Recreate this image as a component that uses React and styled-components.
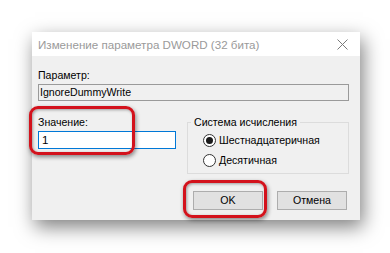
import styled, { createGlobalStyle } from 'styled-components';

const GlobalStyle = createGlobalStyle`
    html, body {
        margin: 0;
        background: #ffffff;
        font-family: 'Liberation Sans', Arial, sans-serif;
    }
`;

const Page = styled.div`
    width: 390px;
    height: 253px;
    padding: 32px 0 0 32px;
    box-sizing: border-box;
    overflow: hidden;
`;

const Dialog = styled.div`
    width: 328px;
    height: 188px;
    background: #f0f0f0;
    box-shadow: 3px 7px 18px rgba(0, 0, 0, 0.5);
    display: flex;
    flex-direction: column;
`;

const TitleBar = styled.div`
    height: 25px;
    background: #ffffff;
    display: flex;
    align-items: center;
    justify-content: space-between;
    padding: 0 12px 0 6px;
    font-size: 11.6px;
    color: #9a9a9a;
`;

const Body = styled.div`
    padding: 11px 11px 10px 6px;
    display: flex;
    flex-direction: column;
`;

const Label = styled.div`
    font-size: 10.6px;
    line-height: 16px;
    color: #000;
`;

const Field = styled.div`
    height: ${(p) => p.$height}px;
    margin-top: 1px;
    box-sizing: border-box;
    border: 1px solid ${(p) => (p.$focused ? '#0078d7' : '#9a9a9a')};
    background: ${(p) => (p.$focused ? '#ffffff' : '#f0f0f0')};
    padding-left: ${(p) => (p.$focused ? 3 : 1)}px;
    font-size: ${(p) => (p.$focused ? 11.5 : 10.6)}px;
    line-height: ${(p) => p.$height - 2}px;
    color: #000;
`;

const Row = styled.div`
    margin-top: 13px;
    display: grid;
    grid-template-columns: 138px 162px;
    column-gap: 11px;
    align-items: start;
`;

const Column = styled.div`
    position: relative;
    display: flex;
    flex-direction: column;
`;

const Highlight = styled.div`
    position: absolute;
    left: ${(p) => p.$left}px;
    top: ${(p) => p.$top}px;
    width: ${(p) => p.$width}px;
    height: ${(p) => p.$height}px;
    box-sizing: border-box;
    border: 3px solid #d3121c;
    border-radius: 9px;
    box-shadow: 1px 2px 4px rgba(0, 0, 0, 0.45), inset 1px 1px 3px rgba(0, 0, 0, 0.35);
    pointer-events: none;
`;

const Group = styled.fieldset`
    margin: 0;
    padding: 0 0 3px 0;
    border: 1px solid #dcdcdc;
    min-inline-size: 0;
    height: 60px;
    box-sizing: border-box;
`;

const Legend = styled.legend`
    margin-left: 3px;
    padding: 0 3px;
    font-size: 10.6px;
    line-height: 16px;
    color: #000;
`;

const RadioRow = styled.label`
    height: 20px;
    display: flex;
    align-items: center;
    gap: 3px;
    padding-left: 15px;
    font-size: 10.6px;
    color: #000;
`;

const RadioCircle = styled.span`
    width: 13px;
    height: 13px;
    box-sizing: border-box;
    border: 1px solid #333;
    border-radius: 50%;
    background: #fff;
    display: flex;
    align-items: center;
    justify-content: center;
    &::after {
        content: '';
        width: 7px;
        height: 7px;
        border-radius: 50%;
        background: ${(p) => (p.$checked ? '#1a1a1a' : 'transparent')};
    }
`;

const Buttons = styled.div`
    margin-top: 16px;
    margin-right: 2px;
    display: flex;
    justify-content: flex-end;
    gap: 14px;
`;

const ButtonWrap = styled.div`
    position: relative;
`;

const Button = styled.button`
    width: 70px;
    height: 19px;
    padding: 0;
    border: 1px solid #adadad;
    background: #e1e1e1;
    font-family: inherit;
    font-size: 10.6px;
    color: #000;
    line-height: 17px;
`;

function CloseIcon() {
    return (
        <svg width='11' height='11' viewBox='0 0 11 11'>
            <path d='M0.5 0.5 L10.5 10.5 M10.5 0.5 L0.5 10.5' stroke='#7a7a7a' strokeWidth='1' />
        </svg>
    );
}

function App() {
    return (
        <>
            <GlobalStyle />
            <Page>
                <Dialog>
                    <TitleBar>
                        <span>Изменение параметра DWORD (32 бита)</span>
                        <CloseIcon />
                    </TitleBar>
                    <Body>
                        <Label>Параметр:</Label>
                        <Field $height={17}>IgnoreDummyWrite</Field>
                        <Row>
                            <Column>
                                <Label>Значение:</Label>
                                <Field $height={18} $focused>
                                    1
                                </Field>
                                <Highlight $left={-9} $top={-8} $width={106} $height={49} />
                            </Column>
                            <Group>
                                <Legend>Система исчисления</Legend>
                                <RadioRow>
                                    <RadioCircle $checked />
                                    Шестнадцатеричная
                                </RadioRow>
                                <RadioRow>
                                    <RadioCircle />
                                    Десятичная
                                </RadioRow>
                            </Group>
                        </Row>
                        <Buttons>
                            <ButtonWrap>
                                <Button>OK</Button>
                                <Highlight $left={-10} $top={-10} $width={84} $height={38} />
                            </ButtonWrap>
                            <ButtonWrap>
                                <Button>Отмена</Button>
                            </ButtonWrap>
                        </Buttons>
                    </Body>
                </Dialog>
            </Page>
        </>
    );
}

export default App;
